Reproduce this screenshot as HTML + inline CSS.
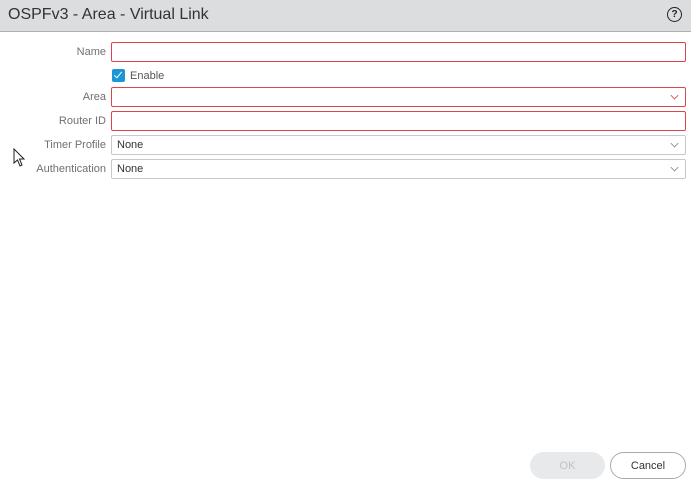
<html><head><style>
body{margin:0;width:691px;height:491px;background:#fff;font-family:"Liberation Sans",sans-serif;position:relative;overflow:hidden}
.hd{position:absolute;left:0;top:0;width:691px;height:31px;background:#dcdddf;border-bottom:1px solid #b0b0b0}
.hd span{position:absolute;left:8px;top:6px;font-size:16px;color:#333}
.help{position:absolute;left:667px;top:7px;width:13px;height:13px;border:1.3px solid #222;border-radius:50%;font-size:10px;font-weight:bold;text-align:center;line-height:13px;color:#222}
.lb{position:absolute;right:585px;font-size:11px;color:#707070;text-align:right;white-space:nowrap}
.in{position:absolute;left:111px;width:573px;height:18px;border:1px solid #c8c8c8;border-radius:2px;font-size:11px;color:#333;line-height:18px;box-sizing:content-box}
.in span{margin-left:5px}
.red{border-color:#d9474b}
.ch{position:absolute;right:7px;top:4px;width:6px;height:6px;border-right:1px solid #888;border-bottom:1px solid #888;transform:rotate(45deg) scale(.8,.8)}
.red .ch{border-color:#d9474b}
.btn{position:absolute;top:452px;height:27px;border-radius:14px;font-size:11px;text-align:center;line-height:27px;box-sizing:border-box}
</style></head><body>
<div class="hd"><span>OSPFv3 - Area - Virtual Link</span><div class="help">?</div></div>
<div class="lb" style="top:46px">Name</div>
<div class="in red" style="top:42px"></div>
<div style="position:absolute;left:112px;top:69px;width:13px;height:13px;background:#1c96d4;border-radius:2px"><div style="position:absolute;left:4px;top:1px;width:3px;height:7px;border-right:1.3px solid #fff;border-bottom:1.3px solid #fff;transform:rotate(40deg)"></div></div>
<div style="position:absolute;left:130px;top:70px;font-size:11px;color:#555">Enable</div>
<div class="lb" style="top:91px">Area</div>
<div class="in red" style="top:87px"><div class="ch"></div></div>
<div class="lb" style="top:115px">Router ID</div>
<div class="in red" style="top:111px"></div>
<div class="lb" style="top:139px">Timer Profile</div>
<div class="in" style="top:135px"><span>None</span><div class="ch"></div></div>
<div class="lb" style="top:163px">Authentication</div>
<div class="in" style="top:159px"><span>None</span><div class="ch"></div></div>
<svg style="position:absolute;left:13px;top:148px" width="14" height="20"><path d="M1 1 L1 15 L4.5 12 L7 18 L9 17 L6.5 11 L11 11 Z" fill="#fff" stroke="#222" stroke-width="1"/></svg>
<div class="btn" style="left:530px;width:75px;background:#e8e9eb;color:#c0c0c0;line-height:28px">OK</div>
<div class="btn" style="left:610px;width:76px;border:1px solid #aaa;color:#333;line-height:26px">Cancel</div>
</body></html>
